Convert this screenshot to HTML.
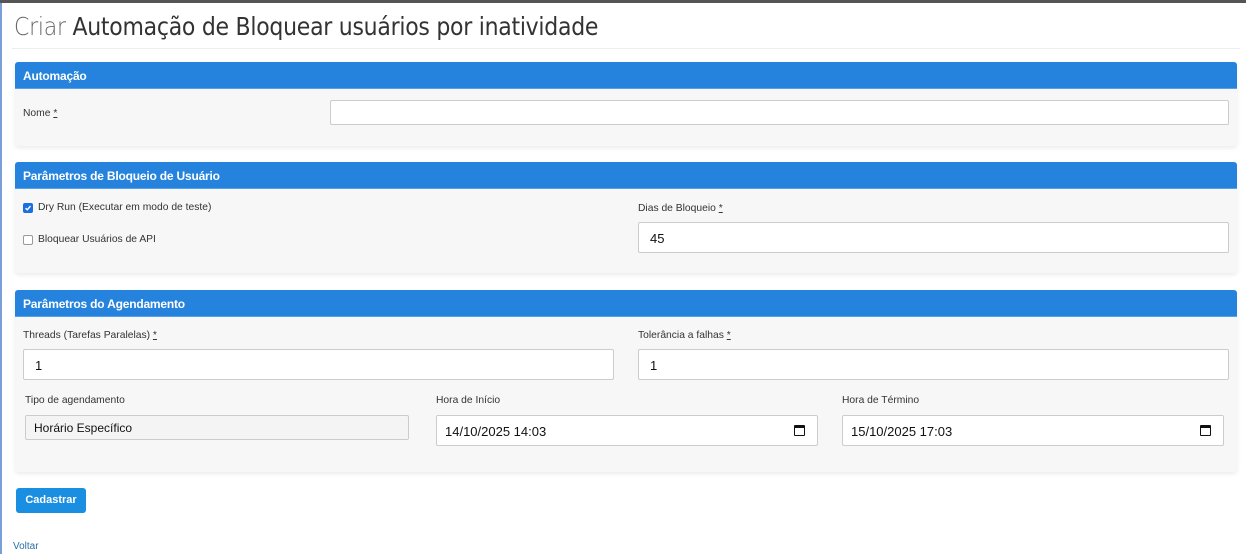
<!DOCTYPE html>
<html><head><meta charset="utf-8"><style>
*{box-sizing:border-box;margin:0;padding:0}
body{width:1246px;height:554px;background:#fff;font-family:"Liberation Sans",Arial,sans-serif;position:relative;overflow:hidden;color:#333}
.topbar{position:absolute;left:0;top:0;width:1246px;height:3px;background:#555}
.lbar{position:absolute;left:0;top:3px;width:2px;height:551px;background:#7a9fd8}
h1{position:absolute;left:14px;top:12px;font-size:25px;font-weight:normal;color:#333;letter-spacing:-0.3px;font-family:"DejaVu Sans","Liberation Sans",sans-serif;transform:scaleX(.88);transform-origin:left}
h1 .c{color:#666;font-weight:200}
.hr{position:absolute;left:12px;top:48px;width:1228px;height:1px;background:#eee}
.panel{position:absolute;left:15px;width:1222px;background:#f7f7f8;border-radius:3px;box-shadow:0 2px 4px rgba(0,0,0,.08)}
.ph{height:27px;background:#2583dd;color:#fff;font-weight:bold;font-size:12px;padding:7px 8px;border-radius:3px 3px 0 0;border-bottom:1px solid #5aa0e6;letter-spacing:-0.2px}
.lbl{position:absolute;font-size:10.3px;color:#333}
.inp{position:absolute;height:31px;background:#fff;border:1px solid #ccc;border-radius:2px;font-size:13px;color:#111;padding:8px 11px}
.cb{position:absolute;width:10px;height:10px;border:1px solid #999;border-radius:2px;background:#fff}
.cb.on{background:#1a6fe0;border-color:#1a6fe0}
.cal{position:absolute;right:12px;top:9px;width:11px;height:11px;border:1.5px solid #111;border-top-width:3px;border-radius:1px}
.btn{position:absolute;left:16px;top:488px;width:70px;height:25px;background:#1a8ee0;color:#fff;font-weight:bold;font-size:11px;border-radius:3px;text-align:center;line-height:25px}
</style></head><body>
<div class="topbar"></div><div class="lbar"></div>
<h1><span class="c">Criar</span> Automação de Bloquear usuários por inatividade</h1>
<div class="hr"></div>

<div class="panel" style="top:62px;height:84px">
<div class="ph">Automação</div>
<div class="lbl" style="left:8px;top:46px">Nome <u>*</u></div>
<div class="inp" style="left:315px;top:38px;width:899px;height:25px"></div>
</div>

<div class="panel" style="top:162px;height:111px">
<div class="ph">Parâmetros de Bloqueio de Usuário</div>
<div class="cb on" style="left:8px;top:41px"><svg width="8" height="8" viewBox="0 0 8 8" style="position:absolute;left:0;top:0"><path d="M1.5 4.2 L3.3 5.8 L6.5 2" stroke="#fff" stroke-width="1.4" fill="none"/></svg></div>
<div class="lbl" style="left:23px;top:40px">Dry Run (Executar em modo de teste)</div>
<div class="cb" style="left:8px;top:73px"></div>
<div class="lbl" style="left:23px;top:72px">Bloquear Usuários de API</div>
<div class="lbl" style="left:623px;top:41px">Dias de Bloqueio <u>*</u></div>
<div class="inp" style="left:623px;top:60px;width:591px">45</div>
</div>

<div class="panel" style="top:290px;height:182px">
<div class="ph">Parâmetros do Agendamento</div>
<div class="lbl" style="left:8px;top:40px">Threads (Tarefas Paralelas) <u>*</u></div>
<div class="inp" style="left:8px;top:59px;width:591px">1</div>
<div class="lbl" style="left:623px;top:40px">Tolerância a falhas <u>*</u></div>
<div class="inp" style="left:623px;top:59px;width:591px">1</div>
<div class="lbl" style="left:10px;top:105px">Tipo de agendamento</div>
<div class="inp" style="left:10px;top:125px;width:384px;height:25px;background:#f4f4f4;padding:5px 8px;font-size:12px">Horário Específico</div>
<div class="lbl" style="left:421px;top:105px">Hora de Início</div>
<div class="inp" style="left:421px;top:125px;width:382px;padding:8px 8px">14/10/2025 14:03<div class="cal"></div></div>
<div class="lbl" style="left:827px;top:105px">Hora de Término</div>
<div class="inp" style="left:827px;top:125px;width:382px;padding:8px 8px">15/10/2025 17:03<div class="cal"></div></div>
</div>

<div class="btn">Cadastrar</div>
<div style="position:absolute;left:13px;top:541px;font-size:10px;color:#2a6fa8">Voltar</div>
</body></html>
